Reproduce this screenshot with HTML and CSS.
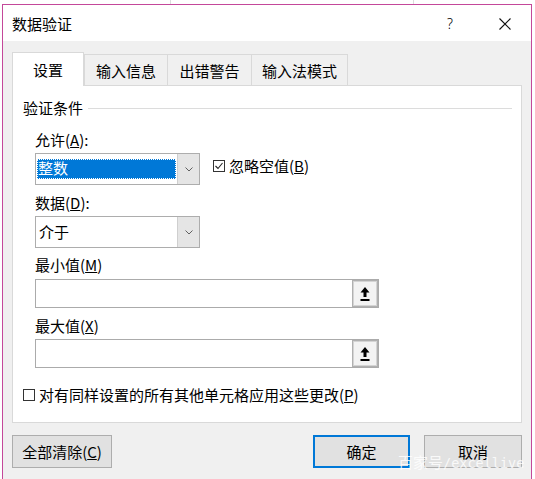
FILE: index.html
```html
<!DOCTYPE html>
<html lang="zh-CN">
<head>
<meta charset="utf-8">
<title>数据验证</title>
<link rel="stylesheet" href="styles.css">
</head>
<body>
<div class="screen">
  <div class="dialog">
    <div class="titlebar">
      <span class="title">数据验证</span>
      <span class="help">?</span>
      <span class="close"><svg width="12" height="12" viewBox="0 0 12 12"><path d="M0.5 0.5 L11.5 11.5 M11.5 0.5 L0.5 11.5" stroke="#111" stroke-width="1.1" fill="none"/></svg></span>
    </div>
    <div class="body">
      <div class="tabs">
        <div class="tab active">设置</div>
        <div class="tab t2">输入信息</div>
        <div class="tab t3">出错警告</div>
        <div class="tab t4">输入法模式</div>
      </div>
      <div class="panel">
        <div class="group"><span>验证条件</span><i class="group-line"></i></div>

        <div class="label l-allow">允许(<u>A</u>):</div>
        <div class="row r-allow">
          <div class="combo">
            <div class="combo-field"><span class="sel">整数</span></div>
            <div class="combo-btn"><svg width="8" height="5" viewBox="0 0 8 5"><path d="M0.5 0.5 L4 4 L7.5 0.5" stroke="#606060" stroke-width="1" fill="none"/></svg></div>
          </div>
          <div class="check c-ignore"><span class="box"><svg width="10" height="10" viewBox="0 0 10 10"><path d="M1.5 5 L4 7.5 L8.5 2" stroke="#222" stroke-width="1.1" fill="none"/></svg></span><span>忽略空值(<u>B</u>)</span></div>
        </div>

        <div class="label l-data">数据(<u>D</u>):</div>
        <div class="row r-data">
          <div class="combo">
            <div class="combo-field"><span class="val">介于</span></div>
            <div class="combo-btn"><svg width="8" height="5" viewBox="0 0 8 5"><path d="M0.5 0.5 L4 4 L7.5 0.5" stroke="#606060" stroke-width="1" fill="none"/></svg></div>
          </div>
        </div>

        <div class="label l-min">最小值(<u>M</u>)</div>
        <div class="input i-min">
          <div class="input-field"></div>
          <div class="pick-btn"><svg width="10" height="14" viewBox="0 0 10 14"><path d="M5 0 L9.5 5.5 L6.5 5.5 L6.5 10 L3.5 10 L3.5 5.5 L0.5 5.5 Z" fill="#000"/><rect x="0.5" y="12" width="9" height="2" fill="#000"/></svg></div>
        </div>

        <div class="label l-max">最大值(<u>X</u>)</div>
        <div class="input i-max">
          <div class="input-field"></div>
          <div class="pick-btn"><svg width="10" height="14" viewBox="0 0 10 14"><path d="M5 0 L9.5 5.5 L6.5 5.5 L6.5 10 L3.5 10 L3.5 5.5 L0.5 5.5 Z" fill="#000"/><rect x="0.5" y="12" width="9" height="2" fill="#000"/></svg></div>
        </div>

        <div class="check c-apply"><span class="box"></span><span>对有同样设置的所有其他单元格应用这些更改(<u>P</u>)</span></div>
      </div>
      <div class="actions">
        <button class="btn btn-clear">全部清除(<u>C</u>)</button>
        <button class="btn btn-ok">确定</button>
        <button class="btn btn-cancel">取消</button>
      </div>
    </div>
  </div>
  <div class="watermark">百家号<span class="wm-latin">/excellive</span></div>
</div>
</body>
</html>
```
FILE: styles.css
```css
html, body {
  margin: 0;
  padding: 0;
}
body {
  background: #fff;
  overflow: hidden;
  font-family: "Noto Sans CJK SC", "Microsoft YaHei", sans-serif;
  font-size: 15px;
  color: #000;
}
.screen {
  position: relative;
  width: 535px;
  height: 479px;
  box-sizing: border-box;
  padding: 4px 0 0 2px;
  overflow: hidden;
  background:
    linear-gradient(to right, transparent 170px, #dcdcdc 170px, #dcdcdc 171px, transparent 171px),
    linear-gradient(to right, transparent 413px, #dcdcdc 413px, #dcdcdc 414px, transparent 414px),
    #fff;
}
.dialog {
  width: 530px;
  height: 520px;
  box-sizing: border-box;
  border: 1px solid #c4489a;
  background: #f0f0f0;
}
.titlebar {
  height: 36px;
  box-sizing: border-box;
  background: #fff;
  display: flex;
  align-items: center;
  padding: 2px 20px 0 9px;
}
.title {
  line-height: 20px;
}
.help {
  margin-left: auto;
  font-family: "Noto Sans", sans-serif;
  font-size: 14px;
  font-weight: 300;
  line-height: 20px;
}
.close {
  margin-left: 46px;
  display: flex;
}
.body {
  padding: 11px 9px 0 9px;
}
.tabs {
  display: flex;
  align-items: flex-end;
  height: 33px;
}
.tab {
  height: 31px;
  box-sizing: border-box;
  border: 1px solid #d9d9d9;
  border-bottom: none;
  border-right: none;
  background: #f0f0f0;
  display: flex;
  align-items: center;
  justify-content: center;
  line-height: 20px;
  padding-top: 2px;
}
.tab.active {
  width: 72px;
  height: 34px;
  margin-bottom: -1px;
  background: #fff;
  border-right: 1px solid #d9d9d9;
  position: relative;
  z-index: 1;
  padding-top: 1px;
}
.t2 { width: 83px; }
.t3 { width: 84px; }
.t4 { width: 97px; border-right: 1px solid #d9d9d9; }
.panel {
  width: 510px;
  height: 338px;
  box-sizing: border-box;
  border: 1px solid #d9d9d9;
  background: #fff;
  display: flex;
  flex-direction: column;
}
.group {
  display: flex;
  align-items: center;
  height: 20px;
  margin: 12px 9px 0 10px;
  line-height: 20px;
}
.group-line {
  flex: 1;
  height: 1px;
  background: #dcdcdc;
  margin-left: 5px;
}
.label {
  line-height: 20px;
  margin-left: 22px;
}
.l-allow { margin-top: 12px; }
.l-data { margin-top: 8px; }
.l-min { margin-top: 7px; }
.l-max { margin-top: 8px; }
.row {
  display: flex;
  margin-left: 22px;
  margin-top: 3px;
}
.combo {
  width: 165px;
  height: 32px;
  box-sizing: border-box;
  border: 1px solid #adadad;
  display: flex;
  background: #fff;
}
.combo-field {
  flex: 1;
  padding: 5px 1px 5px 1px;
  display: flex;
}
.sel {
  flex: 1;
  background: #0078d7;
  color: #fff;
  line-height: 18px;
  padding-left: 1px;
  outline: 1px dotted #fff;
  outline-offset: -1px;
}
.val {
  line-height: 20px;
  padding-left: 2px;
}
.combo-btn {
  width: 21px;
  background: #e5e5e5;
  border-left: 1px solid #cfcfcf;
  display: flex;
  align-items: center;
  justify-content: center;
}
.check {
  display: flex;
  align-items: center;
  line-height: 20px;
}
.box {
  width: 12px;
  height: 12px;
  box-sizing: border-box;
  border: 1px solid #333;
  margin-right: 4px;
  display: flex;
  align-items: center;
  justify-content: center;
  background: #fff;
}
.c-ignore {
  margin-left: 13px;
  margin-top: 3px;
  align-self: flex-start;
}
.c-apply {
  margin-left: 10px;
  margin-top: 17px;
}
.input {
  width: 344px;
  height: 29px;
  box-sizing: border-box;
  border: 1px solid #ababab;
  margin-left: 22px;
  display: flex;
  background: #fff;
}
.i-min { margin-top: 4px; }
.i-max { margin-top: 3px; }
.input-field { flex: 1; }
.pick-btn {
  width: 26px;
  background: #f3f3f3;
  box-shadow: inset 0 0 0 1px #b0b0b0, inset 0 0 0 2px #d4d4d4;
  display: flex;
  align-items: center;
  justify-content: center;
}
.actions {
  display: flex;
  margin-top: 12px;
}
.btn {
  height: 33px;
  box-sizing: border-box;
  border: 1px solid #adadad;
  background: #e1e1e1;
  font-family: inherit;
  font-size: 15px;
  line-height: 20px;
  color: #000;
  padding: 0;
}
.btn-clear { width: 100px; }
.btn-ok {
  width: 97px;
  margin-left: auto;
  border: 2px solid #0078d7;
}
.btn-cancel {
  width: 98px;
  margin-left: 14px;
}
.watermark {
  position: absolute;
  left: 398px;
  top: 452px;
  line-height: 20px;
  font-size: 15px;
  color: rgba(255, 255, 255, 0.82);
  white-space: nowrap;
}
.wm-latin {
  font-family: "DejaVu Sans Mono", monospace;
  font-size: 13.5px;
}
```
